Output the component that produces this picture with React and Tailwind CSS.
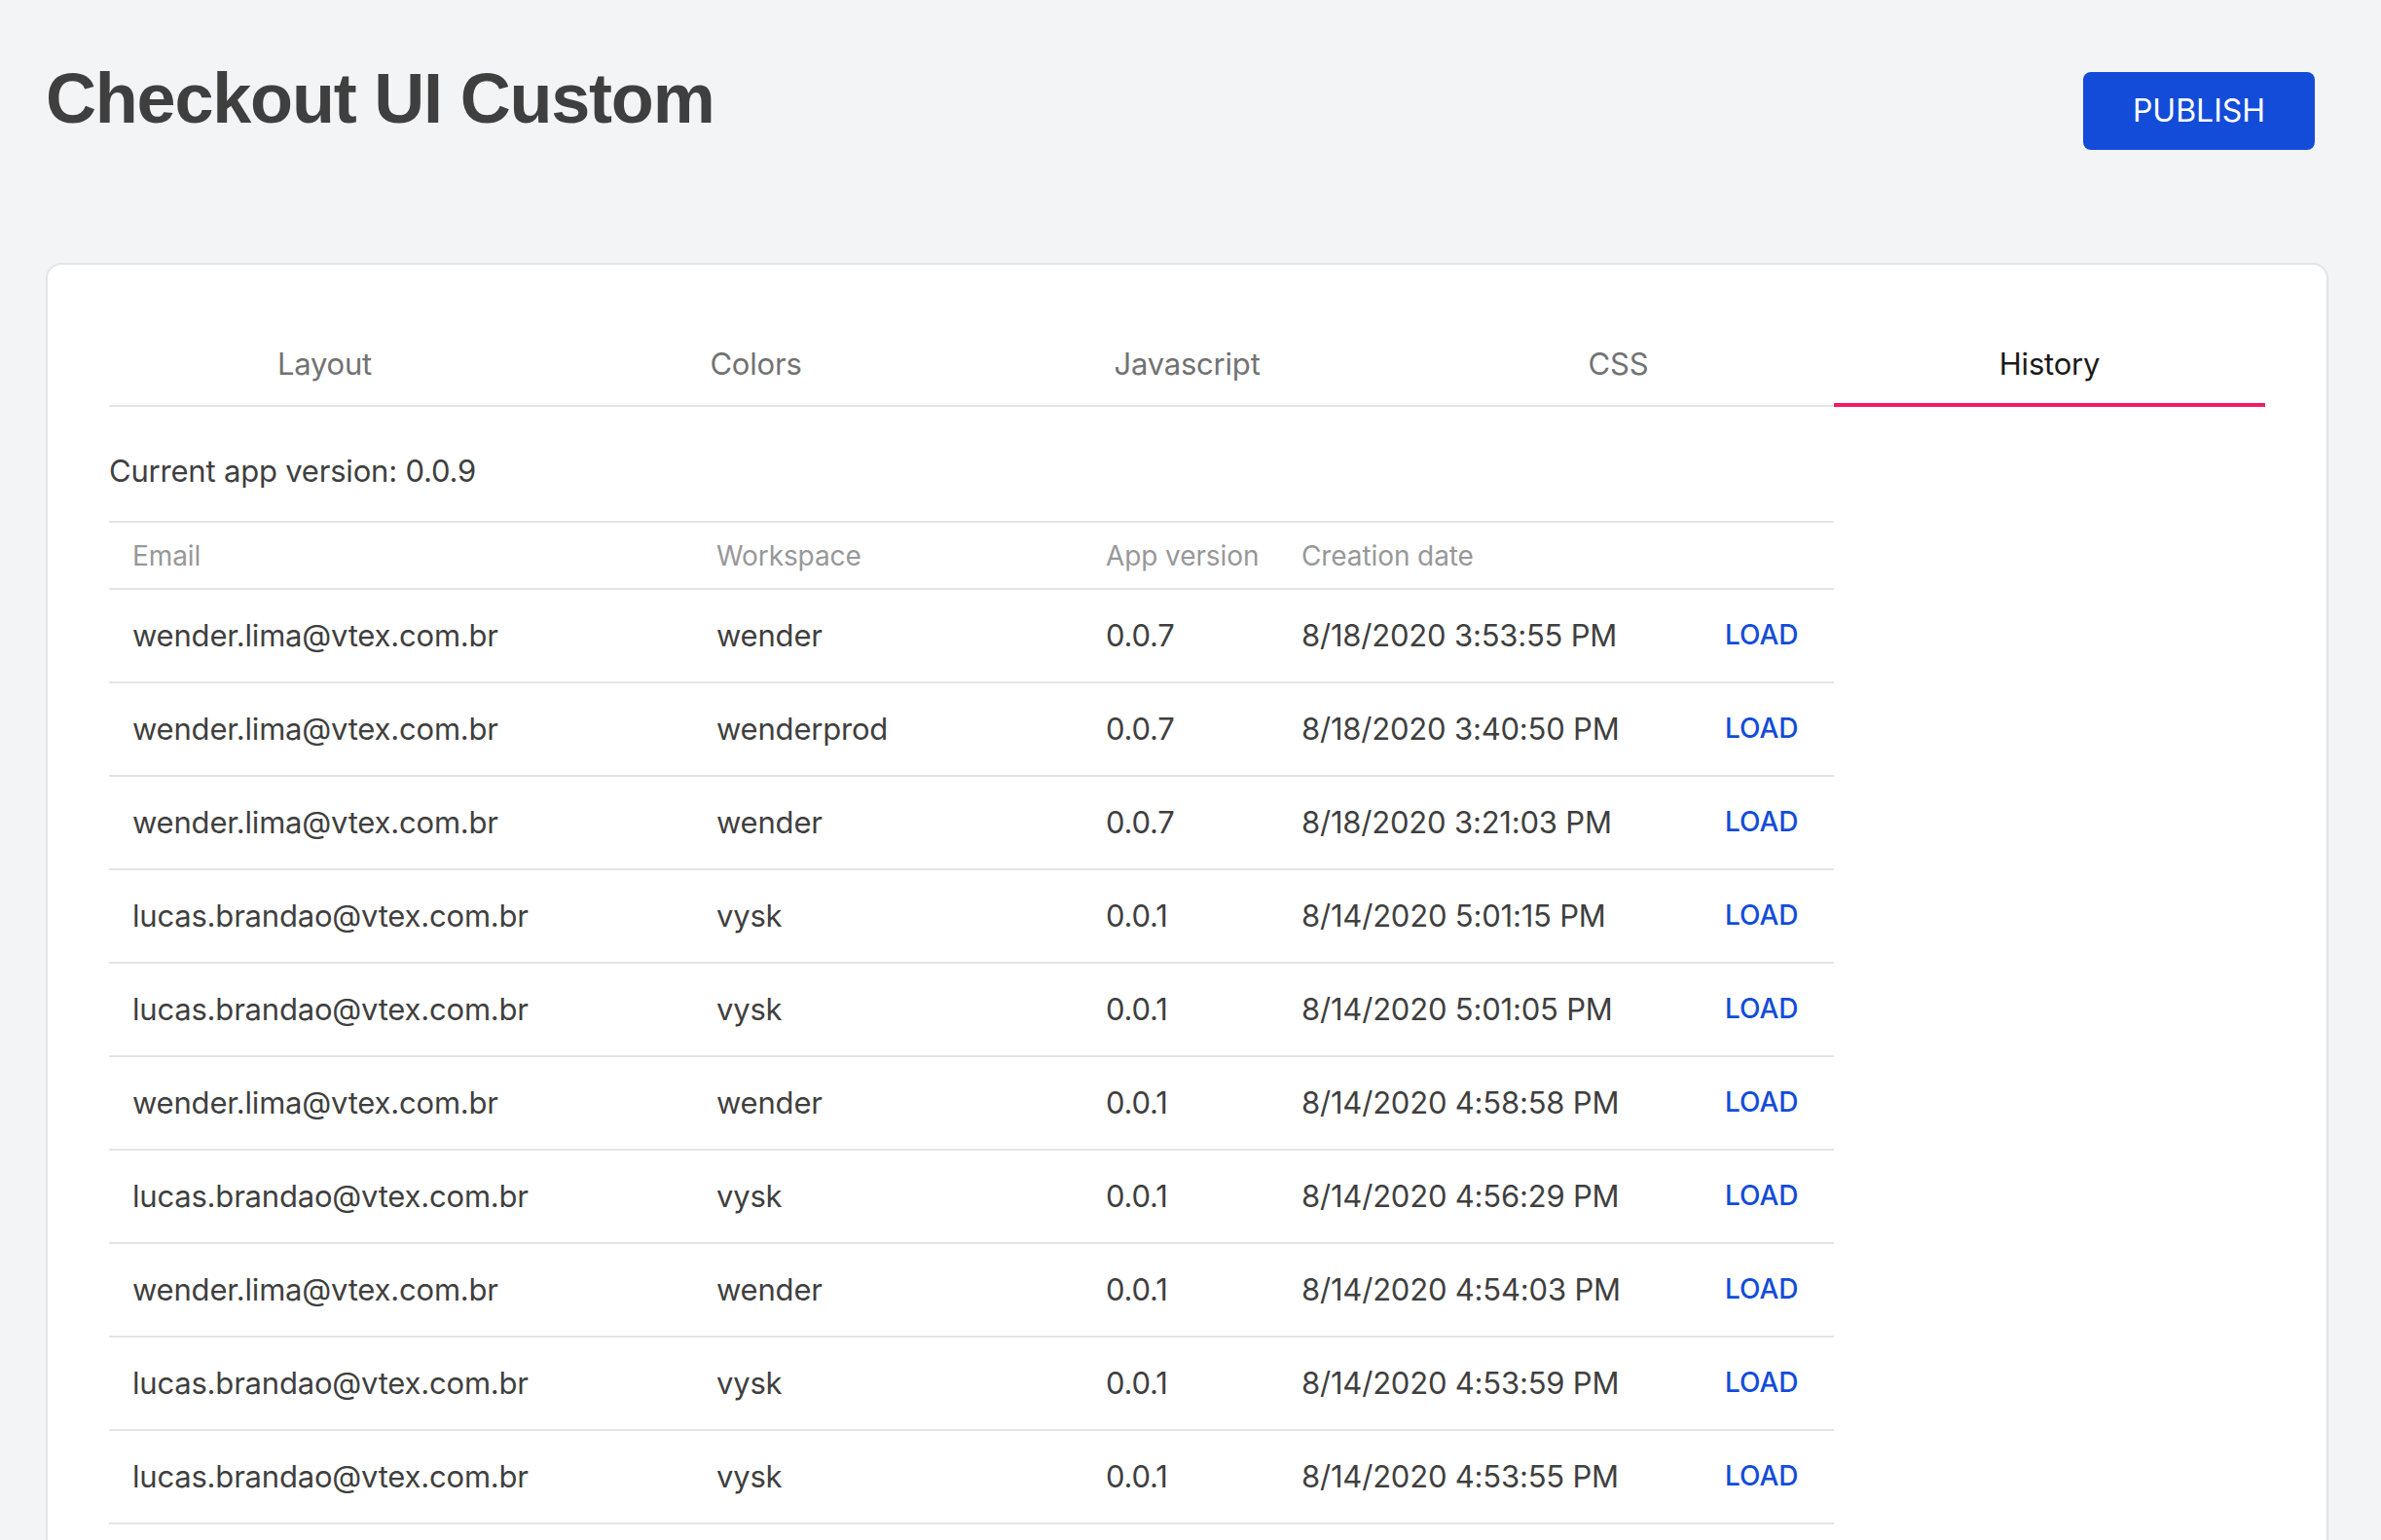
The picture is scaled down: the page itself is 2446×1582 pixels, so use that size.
import React from "react";

const rows = [
  ["wender.lima@vtex.com.br", "wender", "0.0.7", "8/18/2020 3:53:55 PM"],
  ["wender.lima@vtex.com.br", "wenderprod", "0.0.7", "8/18/2020 3:40:50 PM"],
  ["wender.lima@vtex.com.br", "wender", "0.0.7", "8/18/2020 3:21:03 PM"],
  ["lucas.brandao@vtex.com.br", "vysk", "0.0.1", "8/14/2020 5:01:15 PM"],
  ["lucas.brandao@vtex.com.br", "vysk", "0.0.1", "8/14/2020 5:01:05 PM"],
  ["wender.lima@vtex.com.br", "wender", "0.0.1", "8/14/2020 4:58:58 PM"],
  ["lucas.brandao@vtex.com.br", "vysk", "0.0.1", "8/14/2020 4:56:29 PM"],
  ["wender.lima@vtex.com.br", "wender", "0.0.1", "8/14/2020 4:54:03 PM"],
  ["lucas.brandao@vtex.com.br", "vysk", "0.0.1", "8/14/2020 4:53:59 PM"],
  ["lucas.brandao@vtex.com.br", "vysk", "0.0.1", "8/14/2020 4:53:55 PM"],
];

const tabs = ["Layout", "Colors", "Javascript", "CSS", "History"];

export default function App() {
  return (
    <div
      className="h-[1582px] w-[2446px] overflow-hidden bg-[#f3f4f6]"
      style={{ fontFamily: "Inter, 'Noto Sans', sans-serif" }}
    >
      <div className="flex items-start justify-between pl-[47px] pr-[68px] pt-[61px]">
        <h1
          className="text-[72px] leading-[80px] font-bold tracking-[-1.2px] text-[#3f3f40]"
          style={{ fontFamily: "'Liberation Sans', Arial, sans-serif" }}
        >
          Checkout UI Custom
        </h1>
        <button className="mt-[13px] flex h-[80px] w-[238px] items-center justify-center rounded-[8px] bg-[#134cd8] text-[32px] text-white">
          PUBLISH
        </button>
      </div>

      <div className="ml-[47px] mr-[54px] mt-[116px] h-[1400px] rounded-[16px] border-2 border-[#e3e4e6] bg-white px-[63px] pt-[64px] pb-[64px]">
        <div className="flex border-b-2 border-[#e3e4e6]">
          {tabs.map((t) => {
            const active = t === "History";
            return (
              <div
                key={t}
                className={
                  active
                    ? "-mb-[2px] flex h-[82px] flex-1 items-center justify-center border-b-4 border-[#f71963] pb-[2px] text-[31px] tracking-[-0.2px] text-[#1a1a1a]"
                    : "-mb-[2px] flex h-[82px] flex-1 items-center justify-center border-b-4 border-transparent pb-[2px] text-[31px] tracking-[-0.2px] text-[#727273]"
                }
              >
                {t}
              </div>
            );
          })}
        </div>

        <div className="mt-[42px] text-[31px] leading-[48px] tracking-[-0.2px] text-[#3f3f40]">
          Current app version: 0.0.9
        </div>

        <div className="mt-[27px] w-[1772px]">
          <div className="grid h-[71px] grid-cols-[600px_400px_201px_435px_136px] items-center border-y-2 border-[#e3e4e6] text-[28px] tracking-[-0.1px] text-[#979899]">
            <div className="pl-[24px]">Email</div>
            <div className="pl-[24px]">Workspace</div>
            <div className="pl-[24px]">App version</div>
            <div className="pl-[24px]">Creation date</div>
            <div></div>
          </div>
          {rows.map((r, i) => (
            <div
              key={i}
              className="grid h-[96px] grid-cols-[600px_400px_201px_435px_136px] items-center border-b-2 border-[#e3e4e6] text-[31px] tracking-[-0.2px] text-[#3f3f40]"
            >
              <div className="pl-[24px]">{r[0]}</div>
              <div className="pl-[24px]">{r[1]}</div>
              <div className="pl-[24px]">{r[2]}</div>
              <div className="pl-[24px]">{r[3]}</div>
              <div className="pl-[24px] pb-[2px] text-[28px] font-medium tracking-normal text-[#134cd8]">
                LOAD
              </div>
            </div>
          ))}
        </div>
      </div>
    </div>
  );
}
